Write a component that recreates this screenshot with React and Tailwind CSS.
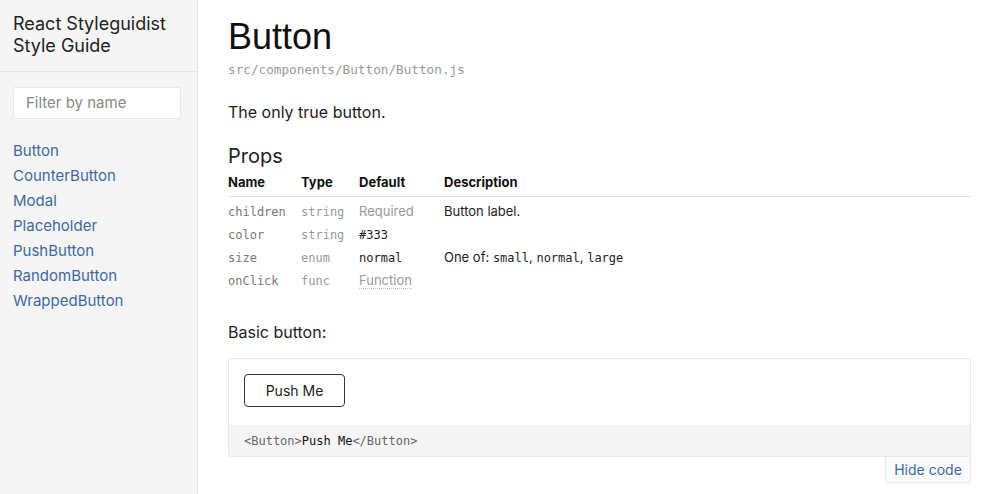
import React from "react";

const sans = { fontFamily: 'Inter, "Liberation Sans", Arial, sans-serif' };
const head = { fontFamily: '"Liberation Sans", Arial, sans-serif' };
const mono = { fontFamily: '"DejaVu Sans Mono", "Liberation Mono", monospace' };

const links = ["Button", "CounterButton", "Modal", "Placeholder", "PushButton", "RandomButton", "WrappedButton"];

const rows = [
  { name: "children", type: "string", def: <span className="text-[#999] text-[13px]" style={sans}>Required</span>, desc: "Button label." },
  { name: "color", type: "string", def: <span className="text-[#222]" style={mono}>#333</span>, desc: "" },
  {
    name: "size",
    type: "enum",
    def: <span className="text-[#222]" style={mono}>normal</span>,
    desc: (
      <>
        One of: <span style={mono} className="text-[12px]">small</span>, <span style={mono} className="text-[12px]">normal</span>, <span style={mono} className="text-[12px]">large</span>
      </>
    ),
  },
  {
    name: "onClick",
    type: "func",
    def: <span className="text-[#999] text-[13px] border-b border-dotted border-[#bbb]" style={sans}>Function</span>,
    desc: "",
  },
];

export default function App() {
  return (
    <div className="flex h-[494px] w-[1000px] overflow-hidden bg-white text-[#333]" style={sans}>
      <aside className="w-[198px] shrink-0 bg-[#f5f5f5] border-r border-[#e6e6e6]">
        <div className="px-[13px] pt-[13px] pb-[14px] border-b border-[#e6e6e6]">
          <div className="text-[18px] leading-[22px] text-[#222]">React Styleguidist<br />Style Guide</div>
        </div>
        <div className="px-[13px] pt-[15px]">
          <div className="h-[32px] w-[168px] bg-white border border-[#e8e8e8] rounded-[2px] flex items-center px-[12px] text-[15px] text-[#888]">
            Filter by name
          </div>
        </div>
        <nav className="px-[13px] pt-[19px] flex flex-col">
          {links.map((l) => (
            <div key={l} className="text-[15px] leading-[25px] text-[#3f6a9e]">{l}</div>
          ))}
        </nav>
      </aside>
      <main className="flex-1 pl-[30px] pr-[29px] pt-[15px]">
        <h1 className="text-[36px] leading-[44px] text-[#111]" style={head}>Button</h1>
        <div className="mt-[2px] text-[12.7px] leading-[18px] text-[#999]" style={mono}>src/components/Button/Button.js</div>
        <p className="mt-[21px] text-[16px] leading-[24px] text-[#222]">The only true button.</p>
        <h2 className="mt-[19px] text-[20px] leading-[26px] text-[#222]">Props</h2>
        <div className="grid grid-cols-[73px_58px_85px_1fr] text-[13px] border-b border-[#e4e4e4] pt-[5px] pb-[6px] leading-[16px] font-bold text-[#111]">
          <div>Name</div>
          <div>Type</div>
          <div>Default</div>
          <div>Description</div>
        </div>
        <div className="pt-[3px]">
          {rows.map((r) => (
            <div key={r.name} className="grid grid-cols-[73px_58px_85px_1fr] text-[13px] h-[23px] items-center">
              <div className="text-[#777] text-[12px]" style={mono}>{r.name}</div>
              <div className="text-[#999] text-[12px]" style={mono}>{r.type}</div>
              <div className="text-[12px]">{r.def}</div>
              <div className="text-[#222]">{r.desc}</div>
            </div>
          ))}
        </div>
        <p className="mt-[28px] text-[16px] leading-[24px] text-[#222]">Basic button:</p>
        <div className="mt-[14px]">
          <div className="border border-[#e8e8e8] rounded-[3px] rounded-br-none overflow-hidden">
            <div className="px-[15px] pt-[15px] pb-[18px] bg-white">
              <button className="h-[33px] w-[101px] border border-[#333] rounded-[4px] bg-white text-[14px] text-[#222]" style={sans}>
                Push Me
              </button>
            </div>
            <div className="h-[31px] bg-[#f5f5f5] flex items-center px-[15px] text-[12px]" style={mono}>
              <span className="text-[#666]">&lt;Button&gt;</span>
              <span className="text-[#111]">Push Me</span>
              <span className="text-[#666]">&lt;/Button&gt;</span>
            </div>
          </div>
          <div className="flex justify-end">
            <div className="h-[26px] w-[86px] border border-t-0 border-[#e8e8e8] rounded-b-[3px] bg-[#fafafa] flex items-center justify-center text-[14px] text-[#3f6a9e]">
              Hide code
            </div>
          </div>
        </div>
      </main>
    </div>
  );
}
